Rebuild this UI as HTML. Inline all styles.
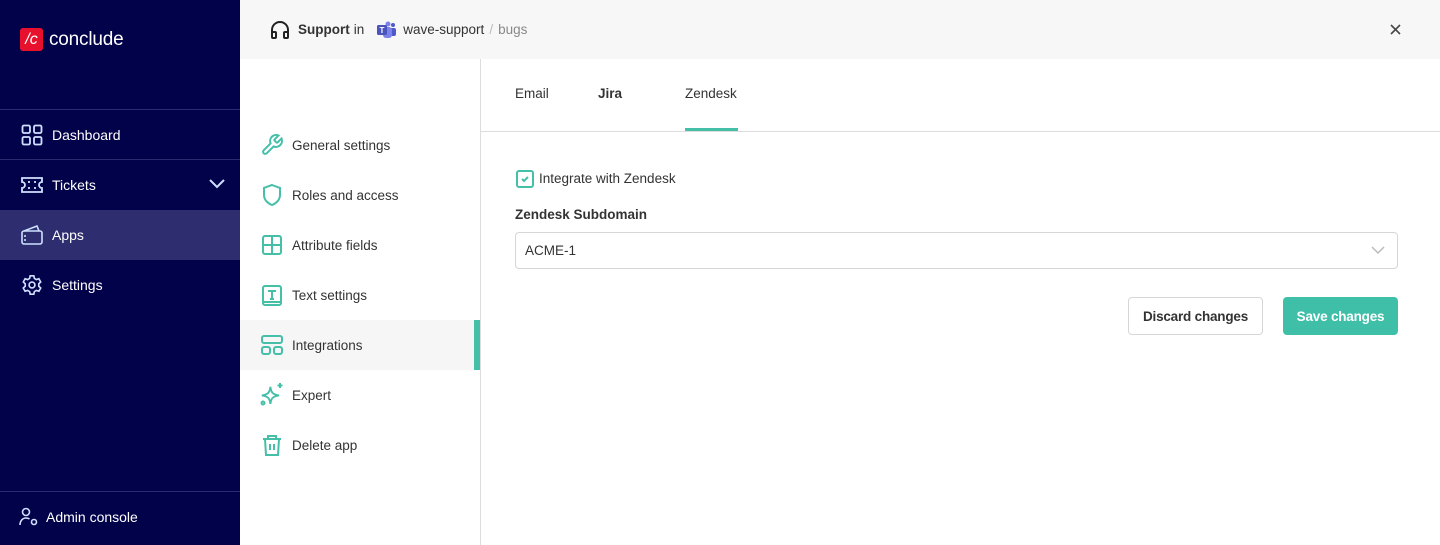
<!DOCTYPE html>
<html><head><meta charset="utf-8"><style>
*{box-sizing:border-box;margin:0;padding:0}
body{width:1440px;height:545px;overflow:hidden;font-family:"Liberation Sans",sans-serif;background:#fff;position:relative;color:#333}
.sb{position:absolute;left:0;top:0;width:240px;height:545px;background:#02024a;color:#fff}
.logo{position:absolute;left:20px;top:28px;display:flex;align-items:center}
.logo .b{width:23px;height:23px;background:#e8112d;border-radius:3px;color:#fff;font-size:16px;line-height:23px;text-align:center;font-style:italic}
.logo span.t{font-size:19px;margin-left:6px;letter-spacing:-0.2px}
.line{position:absolute;left:0;width:240px;height:1px;background:#2b2b70}
.ni{position:absolute;left:0;width:240px;height:50px;display:flex;align-items:center;padding-left:52px;font-size:14px}
.ni svg{position:absolute;left:21px;top:14px}
.top{position:absolute;left:240px;top:0;width:1200px;height:59px;background:#f7f7f7;font-size:13.5px;display:flex;align-items:center}
.mid{position:absolute;left:240px;top:59px;width:241px;height:486px;border-right:1px solid #ddd}
.mi{position:absolute;left:0;width:240px;height:50px;display:flex;align-items:center;padding-left:52px;font-size:13.5px;color:#333}
.mi svg{position:absolute;left:20px;top:13px}
.tab{position:absolute;top:86px;font-size:13.5px;color:#333}
.btn{position:absolute;top:297px;height:38px;border-radius:4px;font-size:13.5px;font-weight:bold;display:flex;align-items:center;justify-content:center;letter-spacing:-0.2px}
</style></head><body>
<div class="sb">
 <div class="logo"><div class="b">/c</div><span class="t">conclude</span></div>
 <div class="line" style="top:109px"></div>
 <div class="line" style="top:159px"></div>
 <div class="line" style="top:491px"></div>
 <div class="ni" style="top:110px"><svg width="22" height="22" viewBox="0 0 22 22" fill="none" stroke="#cfe0ff" stroke-width="1.8"><rect x="1.5" y="1.5" width="7.5" height="7.5" rx="1.5"/><rect x="13" y="1.5" width="7.5" height="7.5" rx="1.5"/><rect x="1.5" y="13" width="7.5" height="7.5" rx="1.5"/><rect x="13" y="13" width="7.5" height="7.5" rx="1.5"/></svg>Dashboard</div>
 <div class="ni" style="top:160px"><svg width="22" height="22" viewBox="0 0 22 22" fill="none" stroke="#cfe0ff" stroke-width="1.8"><path d="M1 4h20v4a3 3 0 0 0 0 6v4H1v-4a3 3 0 0 0 0-6z"/><path d="M8 7v2M8 13v2M14 7v2M14 13v2"/></svg>Tickets<svg style="left:209px;top:19px" width="16" height="10" viewBox="0 0 16 10" fill="none" stroke="#cfe0ff" stroke-width="2"><path d="M1 1l7 7 7-7"/></svg></div>
 <div class="ni" style="top:210px;background:#2d2d70"><svg width="22" height="22" viewBox="0 0 22 22" fill="none" stroke="#cfe0ff" stroke-width="1.6"><rect x="1" y="7" width="20" height="13" rx="2"/><path d="M3 7l13-5 2 5M4 11v2M4 15v2"/></svg>Apps</div>
 <div class="ni" style="top:260px"><svg width="22" height="22" viewBox="0 0 24 24" fill="none" stroke="#cfe0ff" stroke-width="1.8"><circle cx="12" cy="12" r="3.2"/><path d="M10 2h4l.6 2.8 2.2 1.3 2.7-.9 2 3.5-2.1 1.9v2.8l2.1 1.9-2 3.5-2.7-.9-2.2 1.3L14 22h-4l-.6-2.8-2.2-1.3-2.7.9-2-3.5 2.1-1.9v-2.8L2.5 8.7l2-3.5 2.7.9 2.2-1.3z"/></svg>Settings</div>
 <div class="ni" style="top:492px;padding-left:46px"><svg style="left:19px;top:15px" width="20" height="20" viewBox="0 0 20 20" fill="none" stroke="#cfe0ff" stroke-width="1.6"><circle cx="7" cy="5" r="3.5"/><path d="M1 18c0-4 2.5-7 6-7 1.5 0 2.5.4 3.5 1"/><circle cx="15" cy="15" r="2.5"/></svg>Admin console</div>
</div>
<div class="top">
 <svg style="margin-left:30px" width="20" height="20" viewBox="0 0 20 20" fill="none" stroke="#222" stroke-width="2"><path d="M2 16v-6a8 8 0 0 1 16 0v6"/><rect x="2" y="12" width="4" height="6" rx="1"/><rect x="14" y="12" width="4" height="6" rx="1"/></svg>
 <b style="margin-left:8px;color:#333">Support</b><span style="margin-left:4px">in</span>
 <svg style="margin-left:12px" width="20" height="18" viewBox="0 0 20 18"><circle cx="12" cy="3" r="2.5" fill="#7b83eb"/><circle cx="17" cy="4" r="2" fill="#5059c9"/><rect x="14" y="7" width="6" height="8" rx="2" fill="#5059c9"/><rect x="7" y="6" width="9" height="11" rx="3" fill="#7b83eb"/><rect x="1" y="4" width="10" height="10" rx="1.5" fill="#4b53bc"/><text x="6" y="12" font-size="8" fill="#fff" text-anchor="middle" font-family="Liberation Sans" font-weight="bold">T</text></svg>
 <span style="margin-left:7px">wave-support</span><span style="color:#bbb;margin:0 5px">/</span><span style="color:#888">bugs</span>
 <svg style="position:absolute;left:1150px;top:24px" width="11" height="11" viewBox="0 0 11 11" stroke="#444" stroke-width="1.6"><path d="M1 1l9 9M10 1l-9 9"/></svg>
</div>
<div class="mid">
 <div class="mi" style="top:61px"><svg width="24" height="24" viewBox="0 0 24 24" fill="none" stroke="#46bfa9" stroke-width="2"><path d="M14.7 6.3a1 1 0 0 0 0 1.4l1.6 1.6a1 1 0 0 0 1.4 0l3.8-3.8a6 6 0 0 1-7.9 7.9l-6.9 6.9a2.1 2.1 0 0 1-3-3l6.9-6.9a6 6 0 0 1 7.9-7.9z"/></svg>General settings</div>
 <div class="mi" style="top:111px"><svg width="24" height="24" viewBox="0 0 24 24" fill="none" stroke="#46bfa9" stroke-width="2"><path d="M12 2l8 3v7c0 5-4 8.5-8 10-4-1.5-8-5-8-10V5z"/></svg>Roles and access</div>
 <div class="mi" style="top:161px"><svg width="24" height="24" viewBox="0 0 24 24" fill="none" stroke="#46bfa9" stroke-width="2"><rect x="3" y="3" width="18" height="18" rx="2"/><path d="M12 3v18M3 12h18"/></svg>Attribute fields</div>
 <div class="mi" style="top:211px"><svg width="24" height="24" viewBox="0 0 24 24" fill="none" stroke="#46bfa9" stroke-width="2"><rect x="3" y="3" width="18" height="19" rx="2"/><path d="M8 8h8M12 8v8M10 16h4M3 19h18"/></svg>Text settings</div>
 <div class="mi" style="top:261px;background:#f6f6f6"><svg width="24" height="24" viewBox="0 0 24 24" fill="none" stroke="#46bfa9" stroke-width="2"><rect x="2" y="3" width="20" height="7" rx="2"/><rect x="2" y="14" width="8" height="7" rx="2"/><rect x="14" y="14" width="8" height="7" rx="2"/></svg>Integrations<div style="position:absolute;right:0;top:0;width:6px;height:50px;background:#46bfa9"></div></div>
 <div class="mi" style="top:311px"><svg width="24" height="24" viewBox="0 0 24 24" fill="none" stroke="#46bfa9" stroke-width="2"><path d="M12 3c.7 6 2.5 8 9 9-6.5 1-8.3 3-9 9-.7-6-2.5-8-9-9 6.5-1 8.3-3 9-9z" transform="translate(-1 1) scale(0.95)"/><path d="M20 0v5M17.5 2.5h5"/><circle cx="3" cy="20" r="1.5"/></svg>Expert</div>
 <div class="mi" style="top:361px"><svg width="24" height="24" viewBox="0 0 24 24" fill="none" stroke="#46bfa9" stroke-width="2"><path d="M3 6h18M8 6V3h8v3M5 6l1 16h12l1-16M10 11v6M14 11v6"/></svg>Delete app</div>
</div>
<div class="tab" style="left:515px">Email</div>
<div class="tab" style="left:598px;font-weight:bold">Jira</div>
<div class="tab" style="left:685px">Zendesk</div>
<div style="position:absolute;left:685px;top:128px;width:53px;height:3px;background:#46bfa9"></div>
<div style="position:absolute;left:481px;top:131px;width:959px;height:1px;background:#ddd"></div>
<div style="position:absolute;left:516px;top:170px;width:18px;height:18px;border:2px solid #46bfa9;border-radius:3px"><svg style="position:absolute;left:2px;top:2px" width="10" height="10" viewBox="0 0 10 10" fill="none" stroke="#46bfa9" stroke-width="2"><path d="M2 5l2 2 4-4"/></svg></div>
<div style="position:absolute;left:539px;top:171px;font-size:13.5px">Integrate with Zendesk</div>
<div style="position:absolute;left:515px;top:207px;font-size:13.5px;font-weight:bold">Zendesk Subdomain</div>
<div style="position:absolute;left:515px;top:232px;width:883px;height:37px;border:1px solid #d6d6d6;border-radius:4px;font-size:13.5px;padding:10px 0 0 9px">ACME-1<svg style="position:absolute;right:12px;top:13px" width="14" height="9" viewBox="0 0 14 9" fill="none" stroke="#bbb" stroke-width="1.5"><path d="M1 1l6 6 6-6"/></svg></div>
<div class="btn" style="left:1128px;width:135px;border:1px solid #d6d6d6;color:#333">Discard changes</div>
<div class="btn" style="left:1283px;width:115px;background:#40bfa8;color:#fff">Save changes</div>
</body></html>
